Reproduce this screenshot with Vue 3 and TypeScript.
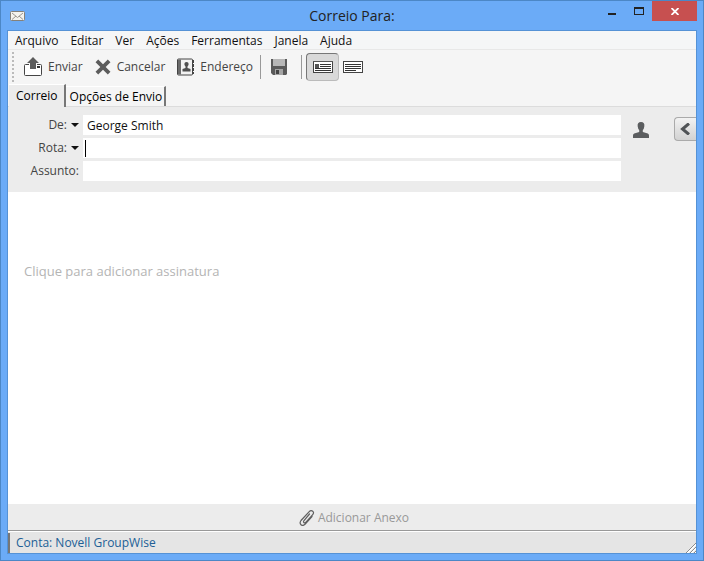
<script setup lang="ts">
import { ref } from 'vue'

const menus: string[] = ['Arquivo', 'Editar', 'Ver', 'Ações', 'Ferramentas', 'Janela', 'Ajuda']
const from = ref('George Smith')
const route = ref('')
const subject = ref('')
const tab = ref<'mail' | 'options'>('mail')
</script>

<template>
  <div class="window">
    <header class="titlebar">
      <svg class="mail" width="15" height="10" viewBox="0 0 15 10" aria-hidden="true">
        <rect x=".5" y=".5" width="14" height="9" rx="1" fill="#f4f3ee" stroke="#85817a" />
        <path d="M2 2l5.500 4.500L13 2M2 8.500l4-3.500M13 8.500L9 5" fill="none" stroke="#99958e" />
      </svg>
      <h1>Correio Para:</h1>
      <div class="controls">
        <button class="min" aria-label="Minimizar">
          <svg width="8" height="2" viewBox="0 0 8 2"><path d="M0 0h8v2H0z" fill="#222" /></svg>
        </button>
        <button class="max" aria-label="Maximizar">
          <svg width="10" height="8" viewBox="0 0 10 8"><path d="M0 0h10v8H0zM1 2v5h8V2z" fill="#222" fill-rule="evenodd" /></svg>
        </button>
        <button class="close" aria-label="Fechar">
          <svg width="8" height="7" viewBox="0 0 8 7"><path d="M.5 0l7 7M7.500 0l-7 7" stroke="#fff" stroke-width="1.800" /></svg>
        </button>
      </div>
    </header>

    <div class="client">
      <nav class="menubar">
        <button v-for="m in menus" :key="m">{{ m }}</button>
      </nav>

      <div class="toolbar">
        <span class="grip"></span>
        <button class="tool send">
          <svg width="18" height="20" viewBox="0 0 18 20" aria-hidden="true">
            <path d="M5 7.500H1.500q-1 0-1 1v9q0 1 1 1h15q1 0 1-1v-9q0-1-1-1H13" fill="#fff" stroke="#444" />
            <path d="M9 0l6 6h-3v6H6V6H3z" fill="#5c5c5c" />
            <path d="M13 9h3v2h-3z" fill="#333" />
          </svg>
          Enviar
        </button>
        <button class="tool cancel">
          <svg width="16" height="16" viewBox="0 0 15 15" aria-hidden="true">
            <path d="M3 .5l4.500 4.500L12 .5 14.500 3 10 7.500l4.500 4.500-2.500 2.500L7.500 10 3 14.500.5 12 5 7.500.5 3z" fill="#5c5c5c" />
          </svg>
          Cancelar
        </button>
        <button class="tool address">
          <svg width="17" height="18" viewBox="0 0 17 18" aria-hidden="true">
            <rect x=".5" y="1" width="15" height="16" rx="1" fill="#f2f2f2" stroke="#444" />
            <path d="M1 1.500h3v15H1z" fill="#6a6a6a" />
            <path d="M16 2v14" stroke="#444" stroke-width="2" stroke-dasharray="3 1" />
            <path d="M9.500 4q2.500 0 2 3l-1 1.500v1.500l3 1v2.500h-8V11l3-1V8.500L7.500 7q-.500-3 2-3z" fill="#4f4f4f" />
          </svg>
          Endereço
        </button>
        <span class="rule"></span>
        <button class="icon save" aria-label="Salvar">
          <svg width="16" height="16" viewBox="0 0 16 16">
            <path d="M0 0h16v15l-1 1H2l-2-2z" fill="#5a5a5a" />
            <path d="M2 0h12v7H2z" fill="#b7b7b7" />
            <path d="M4 10h8v6H4z" fill="#a5a5a5" />
            <path d="M5 11h3v4H5z" fill="#444" />
          </svg>
        </button>
        <span class="rule"></span>
        <button class="icon view pressed" aria-label="HTML" aria-pressed="true">
          <svg width="20" height="12" viewBox="0 0 20 12">
            <rect x=".5" y=".5" width="19" height="11" fill="#fff" stroke="#444" />
            <path d="M0 .5h20" stroke="#555" />
            <path d="M2 3h4v4H2z" fill="#555" />
            <path d="M7 3.500h11M7 5.500h11M2 7.500h16M2 9.500h16" stroke="#333" />
          </svg>
        </button>
        <button class="icon plain" aria-label="Texto simples">
          <svg width="20" height="12" viewBox="0 0 20 12">
            <rect x=".5" y=".5" width="19" height="11" fill="#fff" stroke="#444" />
            <path d="M2 3.500h16M2 5.500h16M2 7.500h16M2 9.500h11" stroke="#333" />
          </svg>
        </button>
      </div>

      <div class="tabs" role="tablist">
        <button role="tab" :class="{ active: tab === 'mail' }" :aria-selected="tab === 'mail'" @click="tab = 'mail'">Correio</button>
        <button role="tab" :class="{ active: tab === 'options' }" :aria-selected="tab === 'options'" @click="tab = 'options'">Opções de Envio</button>
      </div>

      <form class="fields" @submit.prevent>
        <div class="grid">
          <label for="from">De: <i class="arrow"></i></label>
          <input id="from" v-model="from" type="text" />
          <label for="route">Rota: <i class="arrow"></i></label>
          <div class="entry">
            <span class="caret"></span>
            <input id="route" v-model="route" type="text" />
          </div>
          <label for="subject">Assunto:</label>
          <input id="subject" v-model="subject" type="text" />
        </div>
        <button class="person" type="button" aria-label="Contato">
          <svg width="16" height="16" viewBox="0 0 16 16">
            <path d="M8 0q4 0 3.300 4.500Q11 7 9.800 8v2l5 1.500q1.200.5 1.200 2V16H0v-2.500q0-1.500 1.200-2l5-1.500V8Q5 7 4.700 4.500 4 0 8 0z" fill="#5b5d5f" />
          </svg>
        </button>
        <button class="expand" type="button" aria-label="Mostrar painel">
          <svg width="10" height="12" viewBox="0 0 10 12"><path d="M9 .5L2.500 6 9 11.500" fill="none" stroke="#505356" stroke-width="3" /></svg>
        </button>
      </form>

      <main class="editor">
        <button>Clique para adicionar assinatura</button>
      </main>

      <div class="attach">
        <button>
          <svg width="16" height="16" viewBox="0 0 16 16" aria-hidden="true">
            <path d="M10.500 4L5 10.500Q4 12 5 12.700T7.200 12L13.500 4.800Q15.500 2.500 13.700 1.200T10 1.800L2 10.500Q.2 13 2 14.700T6 14.300L13 6.500" fill="none" stroke="#5f5f5f" stroke-width="1.200" stroke-linecap="round" />
          </svg>
          Adicionar Anexo
        </button>
      </div>

      <footer class="status">
        <span>Conta: Novell GroupWise</span>
        <svg width="10" height="10" viewBox="0 0 10 10" aria-hidden="true">
          <path d="M1 10l9-9M5 10l5-5M9 10l1-1" stroke="#fff" stroke-width="2" />
          <path d="M0 10L10 0M4 10l6-6M8 10l2-2" stroke="#8b8b8b" />
        </svg>
      </footer>
    </div>
  </div>
</template>

<style>
body {
  margin: 0;
}
</style>

<style scoped>
* {
  box-sizing: border-box;
}
.window {
  display: flex;
  flex-direction: column;
  min-height: 100vh;
  padding: 0 6px 6px;
  border: 1px solid #4c87c6;
  background: #6babf7;
  font: 12px/16px "Open Sans", "Noto Sans", sans-serif;
  color: #111;
}
button {
  display: flex;
  align-items: center;
  padding: 0;
  border: 0;
  background: none;
  font: inherit;
  color: inherit;
  white-space: nowrap;
}
svg {
  display: block;
  flex: none;
}
.titlebar {
  display: grid;
  grid-template-columns: 1fr auto 1fr;
  align-items: center;
  height: 29px;
}
.mail {
  margin-left: 3px;
}
h1 {
  margin: 0;
  font-size: 14px;
  font-weight: 400;
  line-height: 20px;
  color: #222;
}
.controls {
  display: flex;
  align-self: start;
  justify-content: flex-end;
}
.controls button {
  justify-content: center;
  width: 27px;
  height: 20px;
}
.controls .min svg {
  margin-top: 6px;
}
.controls .close {
  width: 45px;
  background: #c75050;
}
.client {
  display: flex;
  flex: 1;
  flex-direction: column;
  border: 1px solid #5592d6;
  background: #f5f5f5;
}
.menubar {
  display: flex;
  gap: 12px;
  height: 19px;
  padding: 2px 7px 0;
  border-bottom: 1px solid #e8e8e8;
  background: #f5f6f7;
}
.toolbar {
  display: flex;
  align-items: center;
  height: 34px;
  padding-left: 4px;
  color: #444;
}
.grip {
  width: 2px;
  height: 30px;
  margin-right: 10px;
  background: repeating-linear-gradient(#bbb 0 2px, transparent 2px 4px);
}
.tool {
  gap: 6px;
  margin-right: 12px;
}
.address {
  margin-right: 7px;
}
.rule {
  width: 1px;
  height: 24px;
  background: #999;
}
.save {
  margin: 0 14px 0 10px;
}
.view {
  justify-content: center;
  width: 33px;
  height: 28px;
  margin: 0 4px;
  border: 1px solid #bbb;
  border-top-color: #777;
  border-left-color: #777;
  border-radius: 4px;
  background: #d9d9d9;
}
.tabs {
  display: flex;
  align-items: flex-end;
  height: 23px;
  padding-left: 1px;
  border-bottom: 1px solid #dcdcdc;
  color: #000;
}
.tabs button {
  height: 20px;
  padding: 0 2px 0 4px;
  border-top: 1px solid #fff;
  border-right: 2px solid #777;
}
.tabs .active {
  height: 23px;
  margin-bottom: -1px;
  padding: 0 6px 0 7px;
  background: #ececec;
}
.fields {
  display: flex;
  align-items: flex-start;
  padding: 8px 0 11px;
  background: #ececec;
  color: #444;
}
.grid {
  display: grid;
  flex: 1;
  grid-template-columns: 71px 1fr;
  gap: 3px 4px;
}
label {
  display: flex;
  align-items: center;
  justify-content: flex-end;
  gap: 4px;
  white-space: nowrap;
}
.arrow {
  border: 4px solid transparent;
  border-top-color: #111;
  border-bottom-width: 0;
}
input {
  width: 100%;
  min-width: 0;
  height: 20px;
  padding: 0 4px;
  border: 0;
  outline: 0;
  background: #fff;
  font: inherit;
  color: #111;
}
.entry {
  display: flex;
  align-items: center;
  padding-left: 2px;
  background: #fff;
}
.caret {
  width: 1px;
  height: 17px;
  background: #000;
}
.person {
  margin: 7px 25px 0 12px;
}
.expand {
  width: 22px;
  height: 24px;
  margin-top: 2px;
  padding-left: 5px;
  border: 1px solid #aaa;
  border-right: 0;
  border-radius: 4px 0 0 4px;
  background: linear-gradient(#f2f2f2, #d2d2d2);
}
.editor {
  flex: 1;
  padding: 71px 16px;
  background: #fff;
  color: #b4b4b4;
  font-size: 13px;
}
.attach {
  display: flex;
  align-items: center;
  justify-content: center;
  height: 27px;
  padding: 2px 0 0 4px;
  border-bottom: 1px solid #999;
  background: #ececec;
  color: #999;
}
.attach button {
  gap: 3px;
}
.status {
  display: flex;
  align-items: flex-end;
  justify-content: space-between;
  height: 22px;
  border-top: 1px solid #fff;
  background: #e5e5e5;
  color: #215f96;
}
.status span {
  padding-left: 6px;
  border-left: 2px solid #777;
  line-height: 20px;
}
</style>
